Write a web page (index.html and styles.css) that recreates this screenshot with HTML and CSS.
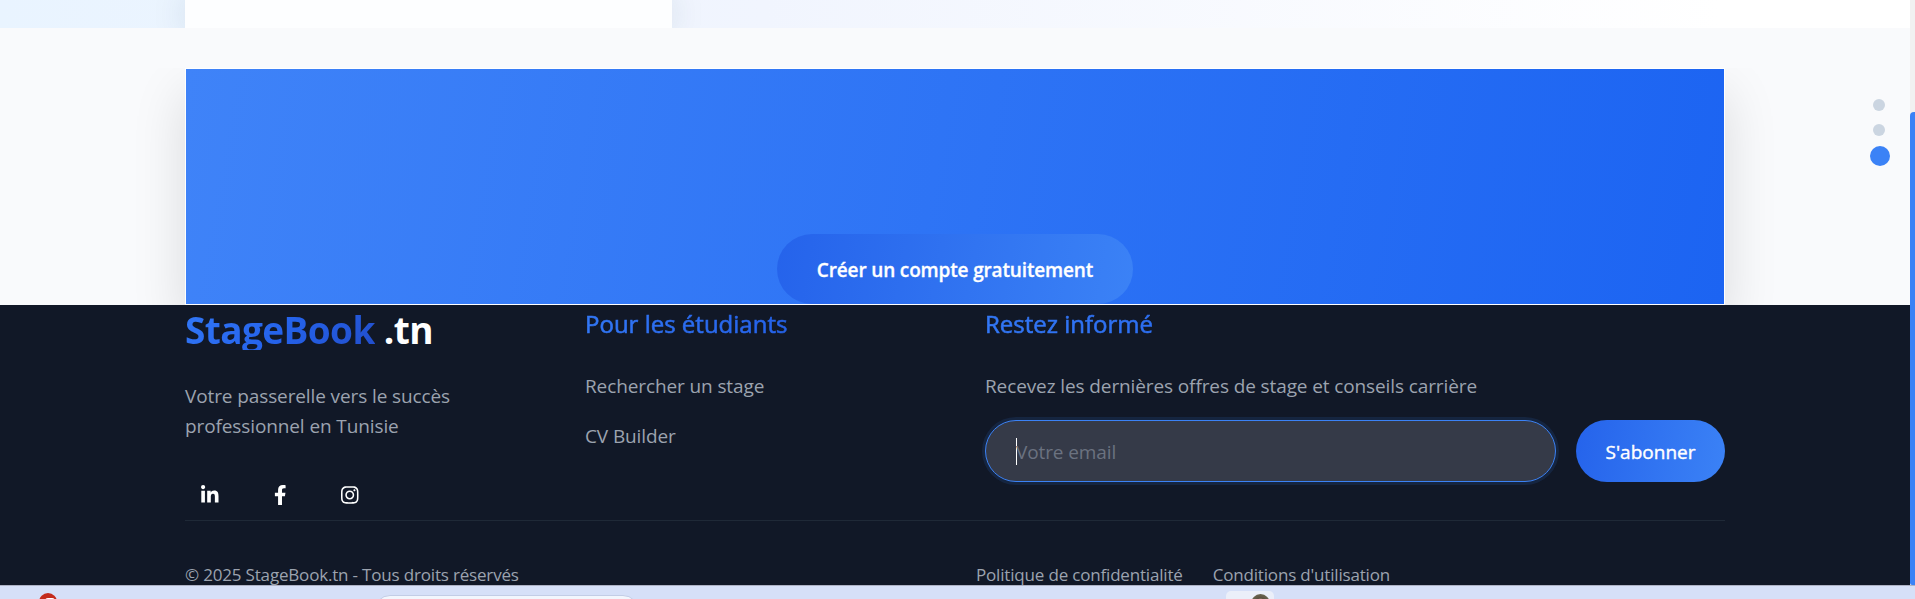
FILE: index.html
```html
<!DOCTYPE html>
<html lang="fr">
<head>
<meta charset="utf-8">
<title>StageBook.tn</title>
<link rel="stylesheet" href="styles.css">
</head>
<body>
<div class="screen">
  <div class="page">
    <section class="features"><div class="feature-card"></div></section>
    <section class="cta">
      <div class="cta-card"><a class="cta-button">Créer un compte gratuitement</a></div>
    </section>
    <footer class="footer">
      <div class="footer-grid">
        <div class="col">
          <div class="logo"><span class="logo-name">StageBook</span><span class="logo-tld">.tn</span></div>
          <p class="tagline">Votre passerelle vers le succès<br>professionnel en Tunisie</p>
          <div class="social">
            <a><svg viewBox="0 0 448 512"><path d="M100.28 448H7.4V148.9h92.88zM53.79 108.1C24.09 108.1 0 83.5 0 53.8a53.79 53.79 0 0 1 107.58 0c0 29.7-24.1 54.3-53.79 54.3zM447.9 448h-92.68V302.4c0-34.7-.7-79.2-48.29-79.2-48.29 0-55.69 37.7-55.69 76.7V448h-92.78V148.9h89.08v40.8h1.3c12.4-23.5 42.69-48.3 87.88-48.3 94 0 111.28 61.9 111.28 142.3V448z"/></svg></a>
            <a><svg viewBox="0 0 320 512"><path d="M279.14 288l14.22-92.66h-88.91v-60.13c0-25.35 12.42-50.06 52.24-50.06h40.42V6.26S260.43 0 225.36 0c-73.22 0-121.08 44.38-121.08 124.72v70.62H22.89V288h81.39v224h100.17V288z"/></svg></a>
            <a><svg viewBox="0 0 448 512"><path d="M224.1 141c-63.6 0-114.9 51.3-114.9 114.9s51.3 114.9 114.9 114.9S339 319.5 339 255.9 287.7 141 224.1 141zm0 189.6c-41.1 0-74.7-33.5-74.7-74.7s33.5-74.7 74.7-74.7 74.7 33.5 74.7 74.7-33.6 74.7-74.7 74.7zm146.4-194.3c0 14.9-12 26.8-26.8 26.8-14.9 0-26.8-12-26.8-26.8s12-26.8 26.8-26.8 26.8 12 26.8 26.8zm76.1 27.2c-1.7-35.9-9.9-67.7-36.2-93.9-26.2-26.2-58-34.4-93.9-36.2-37-2.1-147.9-2.1-184.9 0-35.8 1.7-67.6 9.9-93.9 36.1s-34.4 58-36.2 93.9c-2.1 37-2.1 147.9 0 184.9 1.7 35.9 9.9 67.7 36.2 93.9s58 34.4 93.9 36.2c37 2.1 147.9 2.1 184.9 0 35.9-1.7 67.7-9.9 93.9-36.2 26.2-26.2 34.4-58 36.2-93.9 2.1-37 2.1-147.8 0-184.8zM398.8 388c-7.8 19.6-22.9 34.7-42.6 42.6-29.5 11.7-99.5 9-132.1 9s-102.7 2.6-132.1-9c-19.6-7.8-34.7-22.9-42.6-42.6-11.7-29.5-9-99.5-9-132.1s-2.6-102.7 9-132.1c7.8-19.6 22.9-34.7 42.6-42.6 29.5-11.7 99.5-9 132.1-9s102.7-2.6 132.1 9c19.6 7.8 34.7 22.9 42.6 42.6 11.7 29.5 9 99.5 9 132.1s2.7 102.7-9 132.1z"/></svg></a>
          </div>
        </div>
        <div class="col">
          <h4>Pour les étudiants</h4>
          <a class="link">Rechercher un stage</a>
          <a class="link">CV Builder</a>
        </div>
        <div class="col wide">
          <h4>Restez informé</h4>
          <p class="news">Recevez les dernières offres de stage et conseils carrière</p>
          <form class="subscribe">
            <div class="field"><span class="caret"></span><span class="placeholder">Votre email</span></div>
            <button type="button">S'abonner</button>
          </form>
        </div>
      </div>
      <div class="legal">
        <span class="copy">© 2025 StageBook.tn - Tous droits réservés</span>
        <nav><a>Politique de confidentialité</a><a>Conditions d'utilisation</a></nav>
      </div>
    </footer>
    <div class="dots"><i></i><i></i><i class="active"></i></div>
  </div>
  <div class="scrollbar"><div class="thumb"></div></div>
</div>
<div class="taskbar"><i class="badge"></i><i class="search"></i><i class="app"><b></b></i></div>
</body>
</html>
```
FILE: styles.css
```css
* { box-sizing: border-box; }
body { margin: 0; width: 1915px; height: 599px; overflow: hidden; font-family: "Open Sans", "Noto Sans", sans-serif; font-size: 19px; background: #111827; }
h4, p { margin: 0; }
.screen { display: flex; height: 585px; }
.page { position: relative; width: 1910px; height: 585px; overflow: hidden; background: #f9fafc; }
.features { height: 28px; overflow: hidden; padding-left: 185px; background: linear-gradient(90deg, #e9f4ff 0%, #f1f5fe 40%, #ffffff 90%); }
.feature-card { width: 487px; height: 28px; background: #fdfeff; box-shadow: 0 0 35px rgba(30, 60, 90, .15); }
.cta { height: 277px; padding: 40px 185px 0; overflow: hidden; clip-path: inset(40px 0 0 0); }
.cta-card { height: 237px; padding-top: 165px; border: 1px solid #fff; background: linear-gradient(100deg, #3f83f8, #1c64f2) padding-box; box-shadow: 0 25px 50px rgba(0, 0, 0, .13); display: flex; justify-content: center; }
.cta-button { width: 356px; height: 70px; padding-top: 1px; border-radius: 35px; background: linear-gradient(100deg, #2563eb, #3b82f6); color: #fff; font-weight: 600; line-height: 70px; letter-spacing: -.15px; -webkit-text-stroke: .3px #fff; text-align: center; white-space: nowrap; }
.footer { height: 280px; padding: 0 185px; background: #111827; color: #9ca3af; }
.footer-grid { display: grid; grid-template-columns: repeat(4, 340px); gap: 60px; height: 215px; letter-spacing: -.11px; }
.wide { grid-column: span 2; }
.logo { display: flex; gap: 9px; padding-top: 7px; font-size: 37px; line-height: 36px; font-weight: 700; letter-spacing: -.6px; white-space: nowrap; }
.logo-name { padding-bottom: 2px; color: transparent; background: linear-gradient(135deg, #3277f6, #2563eb 50%, #224ecb); background-clip: text; }
.logo-tld { color: #fff; }
.tagline { padding-top: 31px; line-height: 30px; }
.social { display: flex; gap: 20px; padding-top: 44px; }
.social a { width: 50px; height: 20px; display: flex; justify-content: center; }
.social svg { height: 20px; fill: #fff; }
h4 { height: 60px; padding-top: 1px; font-size: 24px; font-weight: 500; line-height: 36px; letter-spacing: 0; color: transparent; background: linear-gradient(100deg, #3277f6, #2563eb 55%, #1e4fc4); background-clip: text; -webkit-text-stroke: .6px transparent; }
.link { display: block; height: 50px; padding-top: 1px; line-height: 40px; }
.news { padding-top: 1px; line-height: 40px; height: 55px; }
.subscribe { display: flex; gap: 20px; }
.field { display: flex; align-items: center; width: 571px; height: 62px; padding-left: 30px; border: 1px solid #3b82f6; border-radius: 31px; background: #353a48; color: #6b7280; box-shadow: 0 0 0 3px rgba(59, 130, 246, .12); }
.caret { width: 1px; height: 27px; background: #fff; }
.placeholder { padding-top: 1px; margin-left: -1px; }
button { width: 149px; height: 62px; padding: 1px 0 0; border: 0; border-radius: 31px; font: 500 19px "Open Sans", sans-serif; color: #fff; -webkit-text-stroke: .4px #fff; background: linear-gradient(100deg, #2563eb, #3b82f6); }
.legal { display: flex; border-top: 1px solid #1f2937; height: 65px; padding-top: 39px; font-size: 17px; line-height: 30px; letter-spacing: -.18px; white-space: nowrap; }
.copy { flex: none; }
.legal nav { display: flex; gap: 30px; margin-left: auto; margin-right: 335px; }
.dots { position: absolute; left: 1870px; top: 99px; width: 20px; display: flex; flex-direction: column; align-items: center; }
.dots i { width: 12px; height: 12px; margin: 0 2px 13px 0; border-radius: 50%; background: #cbd5e1; }
.dots .active { width: 20px; height: 20px; margin: -3px 0 0; background: #3b82f6; }
.scrollbar { width: 5px; height: 585px; padding-top: 112px; background: #f1f1f1; }
.thumb { height: 473px; border-radius: 4px 0 0 2px; background: #3b82f6; }
.taskbar { position: relative; height: 14px; border-top: 1px solid #aeb2c4; background: #d6e0f8; overflow: hidden; }
.badge { position: absolute; left: 39px; top: 7px; width: 18px; height: 18px; border-radius: 50%; background: #c42b1c; }
.badge::after { content: ""; position: absolute; left: 6px; top: 5px; width: 6px; height: 8px; border: 2px solid #fff; border-radius: 3px; }
.search { position: absolute; left: 374px; top: 9px; width: 265px; height: 32px; border: 1px solid #c3cde6; border-radius: 16px; background: #f2f6fd; }
.app { position: absolute; left: 1226px; top: 5px; width: 48px; height: 40px; border-radius: 5px; background: #ebeff9; }
.app b { position: absolute; left: 25px; top: 3px; width: 19px; height: 20px; border-radius: 50%; background: radial-gradient(circle at 50% 45%, #c9a48e 0 3px, #5b5040 5px, #7f8468 100%); }
```
